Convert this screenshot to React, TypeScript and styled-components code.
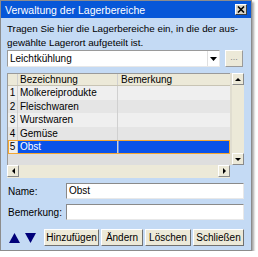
import styled, { createGlobalStyle } from "styled-components";

const GlobalStyle = createGlobalStyle`
    html, body {
        margin: 0;
        padding: 0;
        background: #ffffff;
    }
    * {
        box-sizing: border-box;
    }
`;

const bereiche = ["Molkereiprodukte", "Fleischwaren", "Wurstwaren", "Gemüse", "Obst"];
const ausgewaehlt = 4;

const App = () => {
    return (
        <>
            <GlobalStyle />
            <Window>
                <TitleBar>
                    <TitleText>Verwaltung der Lagerbereiche</TitleText>
                    <CloseButton>
                        <svg width="8" height="7" viewBox="0 0 8 7">
                            <path d="M1 0.5 L7 6.5 M7 0.5 L1 6.5" stroke="#000" strokeWidth="1.6" />
                        </svg>
                    </CloseButton>
                </TitleBar>
                <Body>
                    <Hinweis>
                        Tragen Sie hier die Lagerbereiche ein, in die der aus-
                        <br />
                        gewählte Lagerort aufgeteilt ist.
                    </Hinweis>
                    <ComboRow>
                        <Combo>
                            <ComboText>Leichtkühlung</ComboText>
                            <ComboArrow>
                                <svg width="7" height="4" viewBox="0 0 7 4">
                                    <path d="M0 0 H7 L3.5 4 Z" fill="#000" />
                                </svg>
                            </ComboArrow>
                        </Combo>
                        <DotsButton>...</DotsButton>
                    </ComboRow>
                    <Grid>
                        <GridMain>
                            <GridData>
                                <HeaderRow>
                                    <NumCell $header />
                                    <NameCell>Bezeichnung</NameCell>
                                    <NoteCell>Bemerkung</NoteCell>
                                </HeaderRow>
                                {bereiche.map((name, i) => (
                                    <DataRow key={name} $odd={i % 2 === 1} $selected={i === ausgewaehlt}>
                                        <NumCell>{i + 1}</NumCell>
                                        <NameCell $selected={i === ausgewaehlt}>{name}</NameCell>
                                        <NoteCell $selected={i === ausgewaehlt} />
                                    </DataRow>
                                ))}
                                <EmptyArea />
                            </GridData>
                            <HScroll>
                                <ScrollButton>
                                    <svg width="3" height="6" viewBox="0 0 3 6">
                                        <path d="M3 0 V6 L0 3 Z" fill="#000" />
                                    </svg>
                                </ScrollButton>
                                <ScrollTrack />
                                <ScrollButton>
                                    <svg width="3" height="6" viewBox="0 0 3 6">
                                        <path d="M0 0 V6 L3 3 Z" fill="#000" />
                                    </svg>
                                </ScrollButton>
                            </HScroll>
                        </GridMain>
                        <VScroll>
                            <ScrollButton>
                                <svg width="6" height="3" viewBox="0 0 6 3">
                                    <path d="M0 3 H6 L3 0 Z" fill="#000" />
                                </svg>
                            </ScrollButton>
                            <ScrollTrack />
                            <ScrollButton>
                                <svg width="6" height="3" viewBox="0 0 6 3">
                                    <path d="M0 0 H6 L3 3 Z" fill="#000" />
                                </svg>
                            </ScrollButton>
                        </VScroll>
                    </Grid>
                    <FieldRow>
                        <Label>Name:</Label>
                        <TextInput defaultValue="Obst" />
                    </FieldRow>
                    <FieldRow>
                        <Label>Bemerkung:</Label>
                        <TextInput defaultValue="" />
                    </FieldRow>
                    <ButtonRow>
                        <ArrowButton>
                            <svg width="11" height="10" viewBox="0 0 11 10">
                                <path d="M0 10 H11 L5.5 0 Z" fill="#00007a" />
                            </svg>
                        </ArrowButton>
                        <ArrowButton>
                            <svg width="11" height="10" viewBox="0 0 11 10">
                                <path d="M0 0 H11 L5.5 10 Z" fill="#00007a" />
                            </svg>
                        </ArrowButton>
                        <Buttons>
                            <Button $w={55}>Hinzufügen</Button>
                            <Button $w={42}>Ändern</Button>
                            <Button $w={46}>Löschen</Button>
                            <Button $w={51}>Schließen</Button>
                        </Buttons>
                    </ButtonRow>
                </Body>
            </Window>
        </>
    );
};

const Window = styled.div`
    width: 252px;
    height: 251px;
    border: 1px solid #8c8c8c;
    background: #c4daf4;
    box-shadow: 2px 2px 2px rgba(0, 0, 0, 0.35);
    font-family: "Liberation Sans", Arial, sans-serif;
    font-size: 10px;
    color: #000;
    display: flex;
    flex-direction: column;
`;

const TitleBar = styled.div`
    height: 17px;
    background: #0757d8;
    display: flex;
    align-items: center;
    justify-content: space-between;
    padding: 0 4px 0 4px;
`;

const TitleText = styled.span`
    color: #fff;
    font-size: 10.5px;
    white-space: nowrap;
`;

const CloseButton = styled.div`
    width: 12px;
    height: 11px;
    background: #d8d4c8;
    border: 1px solid;
    border-color: #fff #404040 #404040 #fff;
    display: flex;
    align-items: center;
    justify-content: center;
`;

const Body = styled.div`
    flex: 1;
    padding: 4px 7px 0 6px;
    display: flex;
    flex-direction: column;
`;

const Hinweis = styled.div`
    font-size: 9.8px;
    line-height: 13.5px;
    white-space: nowrap;
    height: 27px;
`;

const ComboRow = styled.div`
    margin-top: 1px;
    display: flex;
    gap: 5px;
    height: 17px;
`;

const Combo = styled.div`
    width: 213px;
    background: #fff;
    border: 1px solid;
    border-color: #9a9a9a #e8e8e8 #e8e8e8 #9a9a9a;
    display: flex;
    align-items: center;
`;

const ComboText = styled.span`
    flex: 1;
    padding-left: 2px;
    font-size: 10px;
`;

const ComboArrow = styled.div`
    width: 12px;
    height: 100%;
    display: flex;
    align-items: center;
    justify-content: center;
    border-left: 1px solid #e0e0e0;
`;

const DotsButton = styled.div`
    width: 18px;
    background: #ece9d8;
    border: 1px solid;
    border-color: #fff #9a9a9a #9a9a9a #fff;
    color: #888;
    font-size: 9px;
    display: flex;
    align-items: center;
    justify-content: center;
    padding-bottom: 3px;
`;

const Grid = styled.div`
    margin-top: 6px;
    display: flex;
    height: 105px;
`;

const GridMain = styled.div`
    width: 223px;
    display: flex;
    flex-direction: column;
`;

const GridData = styled.div`
    flex: 1;
    display: flex;
    flex-direction: column;
    background: #dedede;
    border-left: 1px solid #9a9a9a;
    border-top: 1px solid #9a9a9a;
`;

const HeaderRow = styled.div`
    height: 12px;
    display: flex;
    background: #ece9d8;
    border-bottom: 1px solid #c8c4b4;
`;

const DataRow = styled.div<{ $odd?: boolean; $selected?: boolean }>`
    height: 13.5px;
    display: flex;
    background: ${(p) => (p.$odd ? "#e5e5e5" : "#efefef")};
    outline: ${(p) => (p.$selected ? "1px solid #f4a630" : "none")};
    outline-offset: -1px;
`;

const NumCell = styled.div<{ $header?: boolean }>`
    width: 10px;
    display: flex;
    align-items: center;
    justify-content: center;
    border-right: 1px solid #d0d0d0;
    background: ${(p) => (p.$header ? "#ece9d8" : "transparent")};
`;

const NameCell = styled.div<{ $selected?: boolean }>`
    width: 100px;
    display: flex;
    align-items: center;
    padding-left: 2px;
    white-space: nowrap;
    overflow: hidden;
    border-right: 1px solid #d0d0d0;
    background: ${(p) => (p.$selected ? "#0a52e8" : "transparent")};
    color: ${(p) => (p.$selected ? "#fff" : "#000")};
    margin: ${(p) => (p.$selected ? "1px 0" : "0")};
`;

const NoteCell = styled.div<{ $selected?: boolean }>`
    flex: 1;
    display: flex;
    align-items: center;
    padding-left: 3px;
    white-space: nowrap;
    background: ${(p) => (p.$selected ? "#0a52e8" : "transparent")};
    margin: ${(p) => (p.$selected ? "1px 1px 1px 0" : "0")};
    border-left: ${(p) => (p.$selected ? "1px solid #6d8fe0" : "none")};
`;

const EmptyArea = styled.div`
    flex: 1;
`;

const HScroll = styled.div`
    height: 13px;
    display: flex;
    background: #ece9d8;
`;

const VScroll = styled.div`
    width: 14px;
    height: 92px;
    display: flex;
    flex-direction: column;
    background: #ece9d8;
    border-left: 2px solid #e0ddd0;
    padding-right: 1px;
`;

const ScrollTrack = styled.div`
    flex: 1;
    background: #ece9d8;
`;

const ScrollButton = styled.div`
    width: 12px;
    height: 12px;
    flex: 0 0 auto;
    background: #ece9d8;
    border: 1px solid;
    border-color: #fff #8a8a8a #8a8a8a #fff;
    display: flex;
    align-items: center;
    justify-content: center;
`;

const FieldRow = styled.div`
    margin-top: 5px;
    height: 16px;
    display: flex;
    align-items: center;
`;

const Label = styled.span`
    width: 59px;
    padding-left: 1px;
    font-size: 10px;
`;

const TextInput = styled.input`
    flex: 1;
    height: 16px;
    border: 1px solid;
    border-color: #8a8a8a #e8e8e8 #e8e8e8 #8a8a8a;
    background: #fff;
    font-family: "Liberation Sans", Arial, sans-serif;
    font-size: 10px;
    padding: 0 0 2px 2px;
    outline: none;
`;

const ButtonRow = styled.div`
    margin-top: 9px;
    height: 17px;
    display: flex;
    align-items: stretch;
    gap: 2px;
`;

const ArrowButton = styled.div`
    width: 15px;
    display: flex;
    align-items: center;
    justify-content: center;
`;

const Buttons = styled.div`
    margin-left: 4px;
    display: flex;
    gap: 2px;
`;

const Button = styled.div<{ $w: number }>`
    width: ${(p) => p.$w}px;
    background: #ece9d8;
    border: 1px solid;
    border-color: #fff #707070 #707070 #fff;
    display: flex;
    align-items: center;
    justify-content: center;
    font-size: 10px;
    white-space: nowrap;
`;

export default App;
